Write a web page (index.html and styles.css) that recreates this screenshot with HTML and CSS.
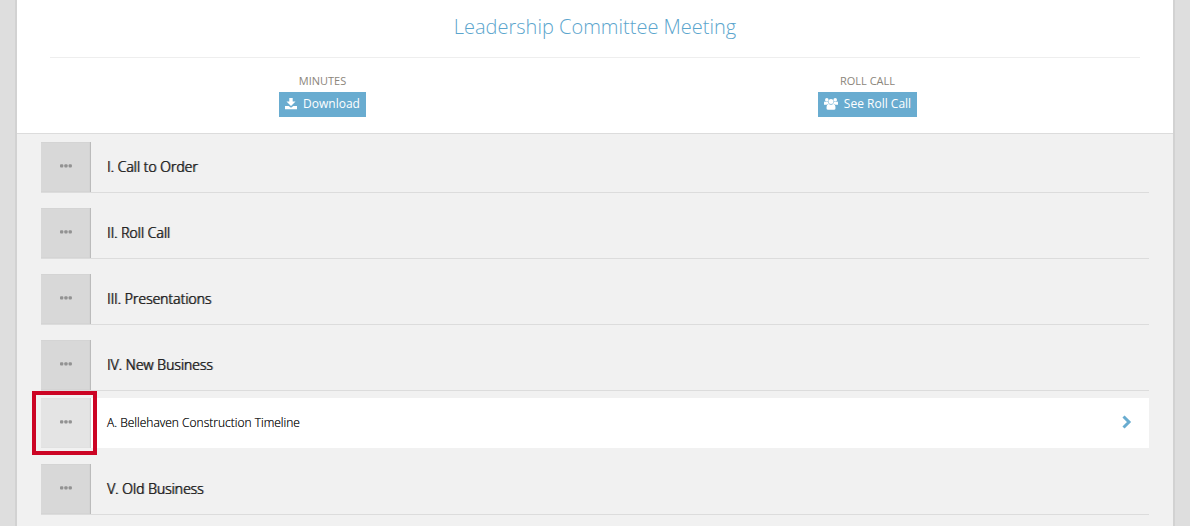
FILE: index.html
```html
<!DOCTYPE html>
<html lang="en">
<head>
<meta charset="utf-8">
<meta name="viewport" content="width=device-width, initial-scale=1">
<title>Leadership Committee Meeting</title>
<link rel="stylesheet" href="styles.css">
</head>
<body>
<svg class="sprite" aria-hidden="true">
  <symbol id="dots" viewBox="0 0 12 4"><rect width="3.300" height="3.300" y=".3" rx="1"/><rect x="4.300" y=".3" width="3.300" height="3.300" rx="1"/><rect x="8.600" y=".3" width="3.300" height="3.300" rx="1"/></symbol>
</svg>
<main class="panel">
  <header class="header">
    <h1 class="title">Leadership Committee Meeting</h1>
    <div class="actions">
      <div class="action">
        <span class="label" id="minutes">MINUTES</span>
        <button class="button" type="button" aria-describedby="minutes">
          <svg class="icon" width="12" height="12" viewBox="0 0 12 12" aria-hidden="true"><path d="M4.300 0h3.400v3.500h2.800L6 8 1.500 3.500h2.800zM0 8h3.700L6 9.800 8.300 8H12v3.300H0z"/></svg>
          Download
        </button>
      </div>
      <div class="action">
        <span class="label" id="roll">ROLL CALL</span>
        <button class="button" type="button" aria-describedby="roll">
          <svg class="icon" width="14" height="12" viewBox="0 0 14 12" aria-hidden="true"><circle cx="2.800" cy="1.900" r="1.800"/><circle cx="11.200" cy="1.900" r="1.800"/><circle cx="7" cy="3.500" r="2.500"/><path d="M0 6.700V4.800Q0 3.400 1 3.500 2.700 4.500 4.100 3.800 4.200 5.200 5 6H3.500L2.700 6.800zM14 6.700V4.800Q14 3.400 13 3.500 11.300 4.500 9.900 3.800 9.800 5.200 9 6h1.500l.8.800zM2.500 10.200Q2.500 6 4.800 6 7 7.600 9.200 6q2.300 0 2.300 4.200 0 1.600-1.600 1.600H4.100q-1.600 0-1.600-1.600z"/></svg>
          See Roll Call
        </button>
      </div>
    </div>
  </header>
  <section class="agenda" aria-label="Agenda">
    <article class="row">
      <button class="handle" type="button" aria-label="Options"><svg width="12" height="4"><use href="#dots"/></svg></button>
      <h2 class="heading">I. Call to Order</h2>
    </article>
    <article class="row">
      <button class="handle" type="button" aria-label="Options"><svg width="12" height="4"><use href="#dots"/></svg></button>
      <h2 class="heading">II. Roll Call</h2>
    </article>
    <article class="row">
      <button class="handle" type="button" aria-label="Options"><svg width="12" height="4"><use href="#dots"/></svg></button>
      <h2 class="heading">III. Presentations</h2>
    </article>
    <article class="row">
      <button class="handle" type="button" aria-label="Options"><svg width="12" height="4"><use href="#dots"/></svg></button>
      <h2 class="heading">IV. New Business</h2>
    </article>
    <article class="row item">
      <button class="handle" type="button" aria-label="Options"><svg width="12" height="4"><use href="#dots"/></svg></button>
      <a class="link" href="#">A. Bellehaven Construction Timeline
        <svg class="chevron" width="10" height="14" viewBox="0 0 10 14" aria-hidden="true"><path d="M1.500 1.500 7 7l-5.500 5.500"/></svg>
      </a>
      <span class="highlight"></span>
    </article>
    <article class="row">
      <button class="handle" type="button" aria-label="Options"><svg width="12" height="4"><use href="#dots"/></svg></button>
      <h2 class="heading">V. Old Business</h2>
    </article>
  </section>
</main>
</body>
</html>
```
FILE: styles.css
```css
* { box-sizing: border-box; }
body {
  margin: 0;
  background: #dedede;
  font-family: "Open Sans", sans-serif;
  color: #222;
}
.sprite { position: absolute; width: 0; height: 0; }
.panel {
  min-height: 100vh;
  margin: 0 15px;
  border: solid #d2d2d2;
  border-width: 0 2px;
  background: #f1f1f1;
}
.header {
  padding: 0 33px 16px;
  background: #fff;
  border-bottom: 1px solid #dcdcdc;
}
.title {
  margin: 0;
  padding: 12px 0 15px;
  border-bottom: 1px solid #eee;
  font-size: 20px;
  line-height: 30px;
  font-weight: 300;
  text-align: center;
  color: #5ba5cd;
}
.actions { display: grid; grid-template-columns: 1fr 1fr; padding-top: 15px; }
.action { display: flex; flex-direction: column; align-items: center; gap: 3px; }
.label { font-size: 11px; line-height: 16px; color: #8b857b; }
.button {
  display: flex;
  align-items: center;
  gap: 6px;
  height: 25px;
  padding: 0 6px 2px;
  border: 0;
  background: #69acd0;
  color: #fff;
  font: 12px/20px "Open Sans", sans-serif;
}
.icon { fill: currentColor; }
.agenda { padding: 8px 24px 0; }
.row {
  display: flex;
  min-height: 51px;
  margin-bottom: 15px;
  border-bottom: 1px solid #dcdcdc;
}
.handle {
  flex: none;
  display: flex;
  align-items: center;
  justify-content: center;
  width: 50px;
  padding: 0 0 2px;
  border: 0;
  background: #d8d8d8;
  box-shadow: inset -1px 0 1px #b8b8b8;
  fill: #929292;
}
.heading {
  align-self: center;
  margin: 0;
  padding-left: 16px;
  font-size: 14px;
  line-height: 20px;
  font-weight: 300;
  text-shadow: 1px 0 0 rgba(34, 34, 34, .6), 0 0 0 #222;
}
.item {
  position: relative;
  min-height: 50px;
  margin-top: -8px;
  margin-bottom: 16px;
  border-bottom: 0;
  background: #fff;
}
.item .handle { background: #e4e4e4; box-shadow: inset -1px 0 1px #ccc; }
.link {
  flex: 1;
  display: flex;
  align-items: center;
  justify-content: space-between;
  padding: 0 17px 2px 16px;
  font-size: 12px;
  font-weight: 300;
  color: #222;
  text-shadow: 0 0 0 #222;
  text-decoration: none;
}
.chevron { fill: none; stroke: #69acd0; stroke-width: 3; }
.highlight {
  position: absolute;
  top: -7px;
  left: -9px;
  width: 65px;
  height: 64px;
  border: 4px solid #cc0424;
  pointer-events: none;
}
```
